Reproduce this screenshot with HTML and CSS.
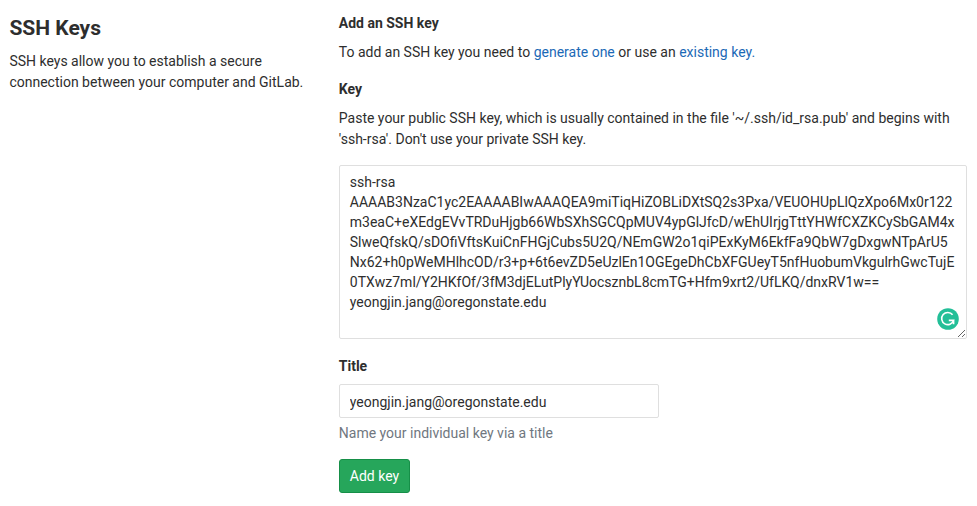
FILE: index.html
```html
<!DOCTYPE html>
<html lang="en">
<head>
<meta charset="utf-8">
<title>SSH Keys</title>
<link rel="stylesheet" href="styles.css">
</head>
<body>
<main class="settings">
  <aside class="intro">
    <h1>SSH Keys</h1>
    <p>SSH keys allow you to establish a secure connection between your computer and GitLab.</p>
  </aside>
  <section class="content">
    <h2>Add an SSH key</h2>
    <p class="lead">To add an SSH key you need to <a href="#">generate one</a> or use an <a href="#">existing key.</a></p>
    <form>
      <label for="key">Key</label>
      <p class="hint">Paste your public SSH key, which is usually contained in the file '~/.ssh/id_rsa.pub' and begins with 'ssh-rsa'. Don't use your private SSH key.</p>
      <div class="key-field">
        <textarea id="key" class="control" spellcheck="false">ssh-rsa
AAAAB3NzaC1yc2EAAAABIwAAAQEA9miTiqHiZOBLiDXtSQ2s3Pxa/VEUOHUpLlQzXpo6Mx0r122
m3eaC+eXEdgEVvTRDuHjgb66WbSXhSGCQpMUV4ypGlJfcD/wEhUIrjgTttYHWfCXZKCySbGAM4x
SlweQfskQ/sDOfiVftsKuiCnFHGjCubs5U2Q/NEmGW2o1qiPExKyM6EkfFa9QbW7gDxgwNTpArU5
Nx62+h0pWeMHlhcOD/r3+p+6t6evZD5eUzlEn1OGEgeDhCbXFGUeyT5nfHuobumVkgulrhGwcTujE
0TXwz7ml/Y2HKfOf/3fM3djELutPlyYUocsznbL8cmTG+Hfm9xrt2/UfLKQ/dnxRV1w==
yeongjin.jang@oregonstate.edu</textarea>
        <svg class="checker" viewBox="0 0 22 22" aria-hidden="true">
          <circle cx="11" cy="11" r="10.8" fill="#23bf98"/>
          <path d="M15.6 6.8A6.1 6.1 0 1 0 16.6 12.4H11.8M16.6 12.2V16.3" fill="none" stroke="#fff" stroke-width="1.6"/>
        </svg>
      </div>
      <label for="title">Title</label>
      <input id="title" class="control" type="text" value="yeongjin.jang@oregonstate.edu">
      <p class="help">Name your individual key via a title</p>
      <button type="button">Add key</button>
    </form>
  </section>
</main>
</body>
</html>
```
FILE: styles.css
```css
* { box-sizing: border-box; }
body {
  margin: 0;
  background: #fff;
  color: #2e2e2e;
  font: 14px/21px Roboto, "Noto Sans", sans-serif;
}
h1, h2, p { margin: 0; }
.settings {
  display: grid;
  grid-template-columns: 297.4px 628px;
  column-gap: 32px;
  padding: 14px 0 0 9.4px;
}
.intro h1 {
  margin: 1px 0 10px;
  font-size: 21px;
  line-height: 26px;
  font-weight: 700;
}
h2 { font-size: 14px; line-height: 18px; font-weight: 700; }
.lead { margin: 10px 0 16px; }
a { color: #1b69b6; text-decoration: none; }
label { display: block; font-weight: 700; }
.hint { margin: 8px 0 15px; }
.control {
  display: block;
  margin: 0;
  padding: 6px 10px;
  border: 1px solid #dfdfdf;
  border-radius: 2px;
  background: #fff;
  color: #2e2e2e;
  font: 14px/20px Roboto, "Noto Sans", sans-serif;
}
.key-field { position: relative; margin-bottom: 17px; }
textarea.control {
  width: 628px;
  height: 174px;
  white-space: pre;
  overflow: hidden;
  resize: both;
}
.checker {
  position: absolute;
  right: 8px;
  bottom: 9px;
  width: 22px;
  height: 22px;
}
input.control { width: 320px; height: 34px; margin-top: 7px; padding: 7px 10px 5px; }
.help { margin: 5px 0 15px; color: #707780; }
button {
  display: block;
  height: 34px;
  padding: 6px 10px;
  border: 1px solid #168f48;
  border-radius: 3px;
  background: #26a65b;
  color: #fff;
  font: 14px/20px Roboto, "Noto Sans", sans-serif;
}
```
